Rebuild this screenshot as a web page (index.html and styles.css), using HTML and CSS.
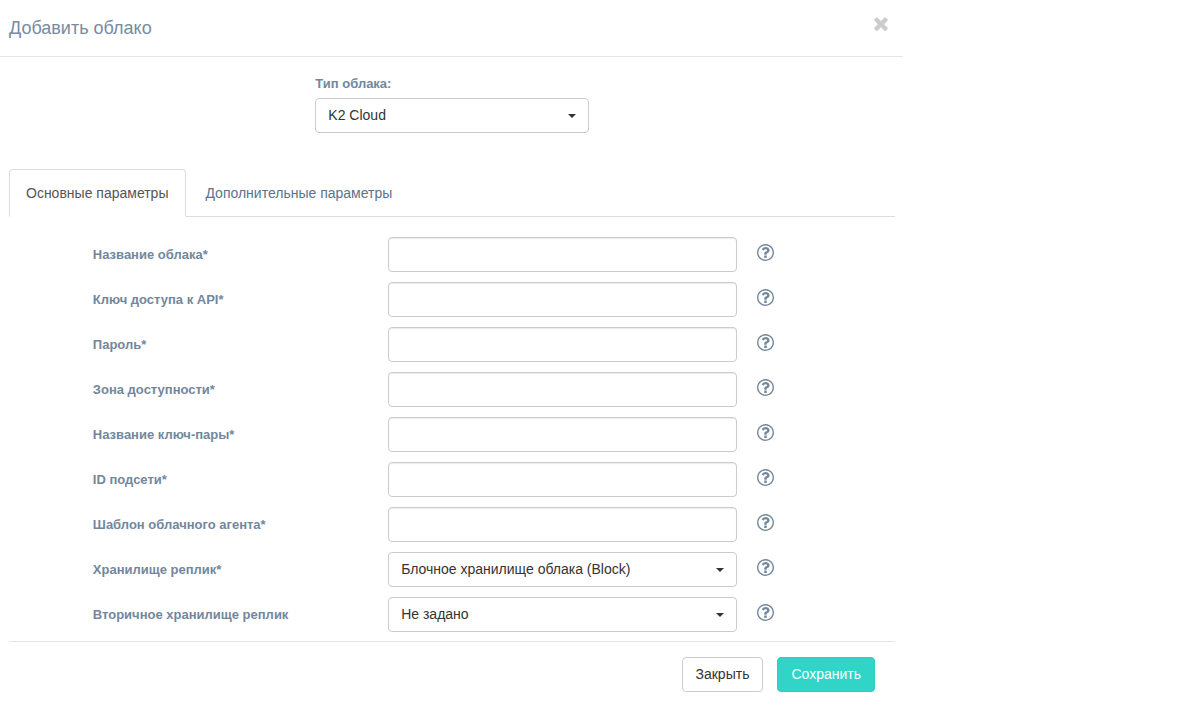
FILE: index.html
```html
<!DOCTYPE html>
<html lang="ru">
<head>
<meta charset="utf-8">
<meta name="viewport" content="width=device-width, initial-scale=1">
<title>Добавить облако</title>
<link rel="stylesheet" href="styles.css">
</head>
<body>
<svg class="sprite" aria-hidden="true">
  <symbol id="icon-help" viewBox="0 0 1536 1536"><path d="M880 1072v160q0 14-9 23t-23 9h-160q-14 0-23-9t-9-23v-160q0-14 9-23t23-9h160q14 0 23 9t9 23zm256-496q0 50-15 90t-45.5 69-52 44-59.5 36q-32 18-46.5 28t-26 24-11.500 29v32q0 14-9 23t-23 9h-160q-14 0-23-9t-9-23v-68q0-35 10.500-64.500t24-47.500 39-35.500 41-25.500 44.500-21q53-25 75-43t22-49q0-42-43.500-71.500t-95.500-29.500q-56 0-95 27-29 20-80 83-9 12-25 12-11 0-19-6l-108-82q-10-7-12-20t5-23q122-192 349-192 129 0 238.500 89.500t109.500 214.500zm-368-448q-130 0-248.500 51t-204 136.500-136.500 204-51 248.500 51 248.500 136.500 204 204 136.500 248.500 51 248.500-51 204-136.500 136.500-204 51-248.500-51-248.500-136.500-204-204-136.500-248.500-51zm768 640q0 209-103 385.500t-279.500 279.500-385.500 103-385.500-103-279.500-279.500-103-385.500 103-385.500 279.500-279.500 385.500-103 385.500 103 279.500 279.500 103 385.500z"/></symbol>
  <symbol id="icon-close" viewBox="302 334 1188 1220"><path d="M1490 1322q0 40-28 68l-136 136q-28 28-68 28t-68-28l-294-294-294 294q-28 28-68 28t-68-28l-136-136q-28-28-28-68t28-68l294-294-294-294q-28-28-28-68t28-68l136-136q28-28 68-28t68 28l294 294 294-294q28-28 68-28t68 28l136 136q28 28 28 68t-28 68l-294 294 294 294q28 28 28 68z"/></symbol>
</svg>
<main class="dialog">
  <header class="dialog-header">
    <h1 class="dialog-title">Добавить облако</h1>
    <button class="close" type="button" aria-label="Закрыть окно"><svg class="close-icon"><use href="#icon-close"/></svg></button>
  </header>
  <form class="dialog-body">
    <div class="row">
      <div class="type-field">
        <label class="label" for="cloud-type">Тип облака:</label>
        <div class="select-wrap"><select class="control select" id="cloud-type"><option>K2 Cloud</option></select></div>
      </div>
    </div>
    <nav class="tabs">
      <a class="tab tab-active" href="#main" aria-current="page">Основные параметры</a>
      <a class="tab" href="#extra">Дополнительные параметры</a>
    </nav>
    <section class="fields" id="main">
      <div class="row">
        <label class="label field-label" for="name">Название облака*</label>
        <div class="field"><input class="control" id="name" type="text"></div>
        <button class="help" type="button" aria-label="Справка"><svg class="help-icon"><use href="#icon-help"/></svg></button>
      </div>
      <div class="row">
        <label class="label field-label" for="api-key">Ключ доступа к API*</label>
        <div class="field"><input class="control" id="api-key" type="text"></div>
        <button class="help" type="button" aria-label="Справка"><svg class="help-icon"><use href="#icon-help"/></svg></button>
      </div>
      <div class="row">
        <label class="label field-label" for="password">Пароль*</label>
        <div class="field"><input class="control" id="password" type="password"></div>
        <button class="help" type="button" aria-label="Справка"><svg class="help-icon"><use href="#icon-help"/></svg></button>
      </div>
      <div class="row">
        <label class="label field-label" for="zone">Зона доступности*</label>
        <div class="field"><input class="control" id="zone" type="text"></div>
        <button class="help" type="button" aria-label="Справка"><svg class="help-icon"><use href="#icon-help"/></svg></button>
      </div>
      <div class="row">
        <label class="label field-label" for="key-pair">Название ключ-пары*</label>
        <div class="field"><input class="control" id="key-pair" type="text"></div>
        <button class="help" type="button" aria-label="Справка"><svg class="help-icon"><use href="#icon-help"/></svg></button>
      </div>
      <div class="row">
        <label class="label field-label" for="subnet">ID подсети*</label>
        <div class="field"><input class="control" id="subnet" type="text"></div>
        <button class="help" type="button" aria-label="Справка"><svg class="help-icon"><use href="#icon-help"/></svg></button>
      </div>
      <div class="row">
        <label class="label field-label" for="template">Шаблон облачного агента*</label>
        <div class="field"><input class="control" id="template" type="text"></div>
        <button class="help" type="button" aria-label="Справка"><svg class="help-icon"><use href="#icon-help"/></svg></button>
      </div>
      <div class="row">
        <label class="label field-label" for="storage">Хранилище реплик*</label>
        <div class="field"><div class="select-wrap"><select class="control select" id="storage"><option>Блочное хранилище облака (Block)</option></select></div></div>
        <button class="help" type="button" aria-label="Справка"><svg class="help-icon"><use href="#icon-help"/></svg></button>
      </div>
      <div class="row">
        <label class="label field-label" for="storage-2">Вторичное хранилище реплик</label>
        <div class="field"><div class="select-wrap"><select class="control select" id="storage-2"><option>Не задано</option></select></div></div>
        <button class="help" type="button" aria-label="Справка"><svg class="help-icon"><use href="#icon-help"/></svg></button>
      </div>
    </section>
    <footer class="dialog-footer">
      <button class="button" type="button">Закрыть</button>
      <button class="button button-primary" type="submit">Сохранить</button>
    </footer>
  </form>
</main>
</body>
</html>
```
FILE: styles.css
```css
* {
  box-sizing: border-box;
}

body {
  margin: 0;
  background: #fff;
  color: #333;
  font: 14px/20px "Liberation Sans", Arial, sans-serif;
}

button,
input,
select {
  font: inherit;
  color: inherit;
}

.sprite {
  display: none;
}

.dialog {
  max-width: 903px;
}

.dialog-header {
  display: flex;
  justify-content: space-between;
  align-items: flex-start;
  padding: 16px 15px 16px 9px;
  border-bottom: 1px solid #e5e5e5;
}

.dialog-title {
  margin: 0;
  color: #768ba3;
  font-size: 18px;
  font-weight: 400;
  line-height: 24px;
}

.close,
.help {
  display: flex;
  padding: 0;
  border: 0;
  background: none;
  cursor: pointer;
}

.close {
  padding-top: 1px;
}

.close-icon {
  width: 14px;
  height: 14px;
  fill: #ccc;
}

.dialog-body {
  padding: 17px 8px 0 9px;
}

.row {
  display: grid;
  grid-template-columns: repeat(12, 1fr);
}

.type-field {
  grid-column: 5 / span 4;
  padding: 0 11px;
}

.label {
  display: block;
  color: #72879d;
  font-size: 13px;
  font-weight: 700;
}

.type-field .label {
  margin-bottom: 4px;
}

.control {
  display: block;
  width: 100%;
  height: 35px;
  padding: 0 12px;
  border: 1px solid #ccc;
  border-radius: 4px;
  background: #fff;
  box-shadow: inset 0 1px 1px rgba(0, 0, 0, 0.08);
}

.select {
  appearance: none;
  padding-bottom: 2px;
  box-shadow: none;
}

.select-wrap {
  position: relative;
}

.select-wrap::after {
  content: "";
  position: absolute;
  top: 16px;
  right: 13px;
  border: 4px solid transparent;
  border-top-color: #333;
  border-bottom: 0;
  pointer-events: none;
}

.tabs {
  display: flex;
  gap: 2px;
  margin-top: 36px;
  border-bottom: 1px solid #ddd;
}

.tab {
  margin-bottom: -1px;
  padding: 13px 16px;
  border: 1px solid transparent;
  border-radius: 4px 4px 0 0;
  color: #5a738e;
  text-decoration: none;
}

.tab-active {
  padding-right: 17px;
  border-color: #ddd #ddd #fff;
  background: #fff;
  color: #555;
}

.fields {
  display: grid;
  gap: 10px;
  padding: 20px 0 9px;
}

.field-label {
  grid-column: 2 / span 4;
  align-self: center;
  padding: 0 10px;
}

.field {
  grid-column: 6 / span 5;
  padding: 0 10px;
}

.help {
  grid-column: 11;
  align-self: start;
  justify-self: start;
  margin: 7px 10px;
}

.help-icon {
  width: 17px;
  height: 17px;
  fill: #73879c;
}

.dialog-footer {
  display: flex;
  justify-content: flex-end;
  gap: 14px;
  padding: 15px 20px;
  border-top: 1px solid #e5e5e5;
}

.button {
  padding: 6px 13px 7px;
  border: 1px solid #ccc;
  border-radius: 4px;
  background: #fff;
  cursor: pointer;
}

.button-primary {
  border-color: #2dcdbf;
  background: #30d5c8;
  color: #fff;
}
```
